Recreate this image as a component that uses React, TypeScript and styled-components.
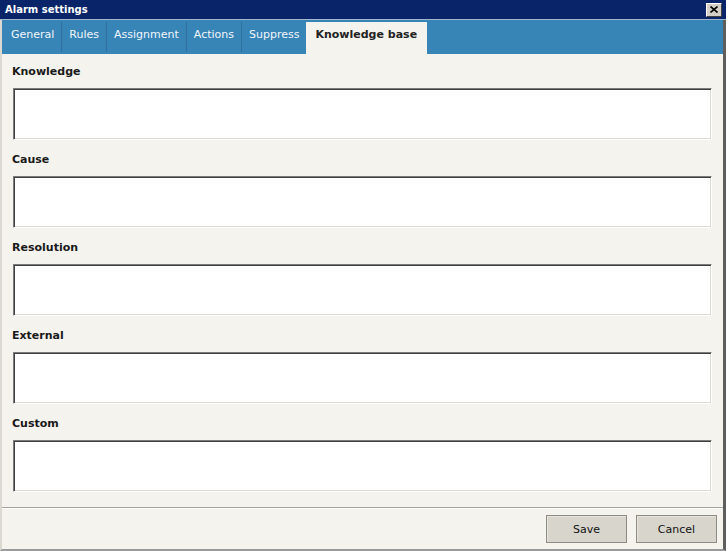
import React, { FC, useState } from 'react';
import styled, { createGlobalStyle } from 'styled-components';

const GlobalStyle = createGlobalStyle`
  html, body {
    margin: 0;
    padding: 0;
    background: #f5f3ee;
  }
  body {
    font-family: "DejaVu Sans", "Liberation Sans", sans-serif;
    font-size: 11px;
  }
`;

const Window = styled.div`
  width: 726px;
  height: 551px;
  display: flex;
  flex-direction: column;
  box-sizing: border-box;
  background: #f5f3ee;
  overflow: hidden;
`;

const TitleBar = styled.div`
  height: 19px;
  flex: none;
  display: flex;
  align-items: center;
  justify-content: space-between;
  padding: 0 4px 0 5px;
  background: #0a246a;
  border-bottom: 1px solid #9fb6cc;
  color: #fff;
`;

const Title = styled.span`
  font-weight: bold;
  font-size: 10px;
`;

const CloseButton = styled.button`
  width: 16px;
  height: 14px;
  padding: 0;
  display: flex;
  align-items: center;
  justify-content: center;
  background: #d4d0c8;
  border: 1px solid;
  border-color: #fff #404040 #404040 #fff;
  box-sizing: border-box;
  cursor: pointer;
`;

const Body = styled.div`
  flex: 1;
  display: flex;
  flex-direction: column;
  border-left: 2px solid #dcd9d2;
  border-right: 3px solid #5e5e5e;
  border-bottom: 2px solid #9a9a9a;
  min-height: 0;
`;

const TabBar = styled.div`
  height: 34px;
  flex: none;
  display: flex;
  align-items: flex-end;
  background: #3784b6;
  padding-left: 2px;
`;

const Tab = styled.div<{ $active?: boolean }>`
  height: ${(p) => (p.$active ? 32 : 30)}px;
  box-sizing: border-box;
  padding: ${(p) => (p.$active ? '6px 9px 0 9px' : '6px 7px 0 7px')};
  line-height: 14px;
  font-size: 11px;
  font-weight: ${(p) => (p.$active ? 'bold' : 'normal')};
  color: ${(p) => (p.$active ? '#222' : '#f2f6fa')};
  background: ${(p) => (p.$active ? '#f5f3ee' : 'transparent')};
  border-right: 1px solid ${(p) => (p.$active ? 'transparent' : '#2f6f9c')};
  margin-bottom: ${(p) => (p.$active ? 0 : 2)}px;
  margin-left: ${(p) => (p.$active ? '-1px' : 0)};
  white-space: nowrap;
  cursor: default;
`;

const Content = styled.div`
  flex: 1;
  display: flex;
  flex-direction: column;
  padding: 11px 11px 0 11px;
`;

const Section = styled.div`
  display: flex;
  flex-direction: column;
  margin-bottom: 13px;

  &:last-child {
    margin-bottom: 0;
  }
`;

const Label = styled.label`
  font-weight: bold;
  font-size: 11px;
  line-height: 14px;
  color: #1a1a1a;
  height: 23px;
  margin-left: -1px;
`;

const Field = styled.textarea`
  display: block;
  width: 699px;
  height: 52px;
  box-sizing: border-box;
  margin: 0;
  padding: 3px;
  resize: none;
  background: #fff;
  border: 1px solid;
  border-color: #7a7a7a #fff #fff #7a7a7a;
  box-shadow: inset 1px 1px 0 #404040, inset -1px -1px 0 #dcd9d0;
  font-family: "DejaVu Sans", sans-serif;
  font-size: 11px;
  outline: none;
`;

const Footer = styled.div`
  flex: none;
  height: 42px;
  box-sizing: border-box;
  display: flex;
  justify-content: flex-end;
  align-items: flex-start;
  gap: 9px;
  padding: 7px 6px 0 0;
  border-top: 1px solid #a6a49e;
  box-shadow: inset 0 1px 0 #fff;
`;

const Button = styled.button`
  width: 81px;
  height: 28px;
  box-sizing: border-box;
  background: #d8d6cc;
  border: 1px solid #8c8b84;
  box-shadow: inset 1px 1px 0 #e6e4dc;
  font-family: "DejaVu Sans", sans-serif;
  font-size: 11px;
  color: #111;
  padding: 0;
  cursor: pointer;
`;

const tabs = ['General', 'Rules', 'Assignment', 'Actions', 'Suppress', 'Knowledge base'];
const fields = ['Knowledge', 'Cause', 'Resolution', 'External', 'Custom'];

const CloseIcon: FC = () => (
  <svg width="8" height="7" viewBox="0 0 8 7">
    <path d="M0.5 0.5 L7.5 6.5 M7.5 0.5 L0.5 6.5" stroke="#000" strokeWidth="1.6" />
  </svg>
);

const App: FC = () => {
  const [active, setActive] = useState('Knowledge base');
  return (
    <>
      <GlobalStyle />
      <Window>
        <TitleBar>
          <Title>Alarm settings</Title>
          <CloseButton aria-label="Close">
            <CloseIcon />
          </CloseButton>
        </TitleBar>
        <Body>
          <TabBar>
            {tabs.map((t) => (
              <Tab key={t} $active={t === active} onClick={() => setActive(t)}>
                {t}
              </Tab>
            ))}
          </TabBar>
          <Content>
            {fields.map((f) => (
              <Section key={f}>
                <Label>{f}</Label>
                <Field />
              </Section>
            ))}
          </Content>
          <Footer>
            <Button>Save</Button>
            <Button>Cancel</Button>
          </Footer>
        </Body>
      </Window>
    </>
  );
};

export default App;
